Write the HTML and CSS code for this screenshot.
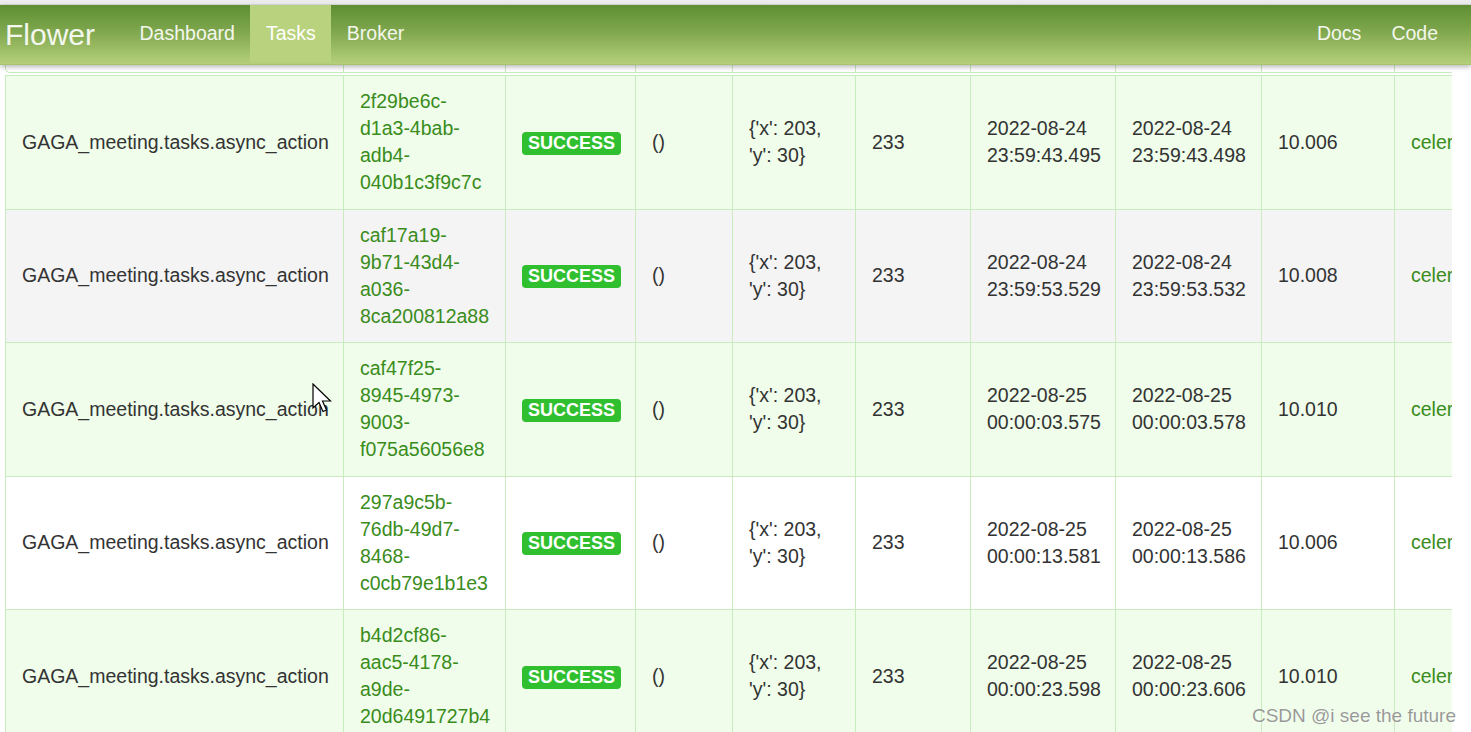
FILE: index.html
```html
<!DOCTYPE html>
<html lang="en">
<head>
  <meta charset="UTF-8">
  <title>Flower</title>
  <meta name="viewport" content="width=device-width, initial-scale=1.0">
  <link rel="stylesheet" href="styles.css">
</head>
<body>
  <div class="topline"></div>
  <div class="navbar">
    <a href="#" class="brand">Flower</a>
    <ul class="nav">
      <li><a href="#">Dashboard</a></li>
      <li class="active"><a href="#">Tasks</a></li>
      <li><a href="#">Broker</a></li>
    </ul>
    <ul class="nav nav-right">
      <li><a href="#">Docs</a></li>
      <li><a href="#">Code</a></li>
    </ul>
  </div>

  <div class="container">
    <div class="stub">
      <div class="c1"></div><div class="c2"></div><div class="c3"></div><div class="c4"></div><div class="c5"></div>
      <div class="c6"></div><div class="c7"></div><div class="c8"></div><div class="c9"></div><div class="c10"></div>
    </div>
    <table class="tasks">
      <colgroup>
        <col class="c1"><col class="c2"><col class="c3"><col class="c4"><col class="c5">
        <col class="c6"><col class="c7"><col class="c8"><col class="c9"><col class="c10">
      </colgroup>
      <tbody>
        <tr class="green">
          <td>GAGA_meeting.tasks.async_action</td>
          <td><a href="#">2f29be6c-d1a3-4bab-adb4-040b1c3f9c7c</a></td>
          <td><span class="label">SUCCESS</span></td>
          <td>()</td>
          <td>{'x': 203, 'y': 30}</td>
          <td>233</td>
          <td>2022-08-24 23:59:43.495</td>
          <td>2022-08-24 23:59:43.498</td>
          <td>10.006</td>
          <td class="worker"><a href="#">celer</a></td>
        </tr>
        <tr class="gray">
          <td>GAGA_meeting.tasks.async_action</td>
          <td><a href="#">caf17a19-9b71-43d4-a036-8ca200812a88</a></td>
          <td><span class="label">SUCCESS</span></td>
          <td>()</td>
          <td>{'x': 203, 'y': 30}</td>
          <td>233</td>
          <td>2022-08-24 23:59:53.529</td>
          <td>2022-08-24 23:59:53.532</td>
          <td>10.008</td>
          <td class="worker"><a href="#">celer</a></td>
        </tr>
        <tr class="green">
          <td>GAGA_meeting.tasks.async_action</td>
          <td><a href="#">caf47f25-8945-4973-9003-f075a56056e8</a></td>
          <td><span class="label">SUCCESS</span></td>
          <td>()</td>
          <td>{'x': 203, 'y': 30}</td>
          <td>233</td>
          <td>2022-08-25 00:00:03.575</td>
          <td>2022-08-25 00:00:03.578</td>
          <td>10.010</td>
          <td class="worker"><a href="#">celer</a></td>
        </tr>
        <tr class="white">
          <td>GAGA_meeting.tasks.async_action</td>
          <td><a href="#">297a9c5b-76db-49d7-8468-c0cb79e1b1e3</a></td>
          <td><span class="label">SUCCESS</span></td>
          <td>()</td>
          <td>{'x': 203, 'y': 30}</td>
          <td>233</td>
          <td>2022-08-25 00:00:13.581</td>
          <td>2022-08-25 00:00:13.586</td>
          <td>10.006</td>
          <td class="worker"><a href="#">celer</a></td>
        </tr>
        <tr class="green">
          <td>GAGA_meeting.tasks.async_action</td>
          <td><a href="#">b4d2cf86-aac5-4178-a9de-20d6491727b4</a></td>
          <td><span class="label">SUCCESS</span></td>
          <td>()</td>
          <td>{'x': 203, 'y': 30}</td>
          <td>233</td>
          <td>2022-08-25 00:00:23.598</td>
          <td>2022-08-25 00:00:23.606</td>
          <td>10.010</td>
          <td class="worker"><a href="#">celer</a></td>
        </tr>
      </tbody>
    </table>
  </div>

  <svg class="cursor" width="20" height="30" viewBox="0 0 20 30">
    <path d="M1 1 L1 25 L7 19.5 L11 28.5 L14.5 27 L10.5 18 L18.5 18 Z" fill="#fff" stroke="#000" stroke-width="1.2" stroke-linejoin="miter"/>
  </svg>
  <div class="watermark">CSDN @i see the future</div>
</body>
</html>
```

FILE: styles.css
```css
html, body {
  margin: 0;
  padding: 0;
  background: #fff;
  color: #333;
  font-family: "Liberation Sans", Arial, sans-serif;
  font-size: 19.5px;
  line-height: 27px;
  overflow: hidden;
}
a {
  color: #3a8c1c;
  text-decoration: none;
}
.topline {
  height: 5px;
  background: #ededed;
  border-bottom: 1px solid #dcdcdc;
  box-sizing: border-box;
}
.navbar {
  position: relative;
  z-index: 2;
  display: flex;
  align-items: stretch;
  height: 59px;
  background: linear-gradient(to bottom, #5e8e33 0%, #7fa74e 45%, #b5cf7b 100%);
  border-bottom: 1px solid #a9c26e;
  box-shadow: 0 2px 5px rgba(0, 0, 0, 0.28);
}
.brand {
  color: #f4f7ee;
  font-size: 30px;
  line-height: 59px;
  padding: 0 29px 0 5px;
}
.nav {
  display: flex;
  margin: 0;
  padding: 0;
  list-style: none;
}
.nav li a {
  display: block;
  color: #f4f7ee;
  line-height: 57px;
  padding: 0 15.5px;
}
.nav li.active a {
  background: #b9d27d;
  color: #fff;
}
.nav-right {
  margin-left: auto;
  padding-right: 18px;
}
.nav-right li a {
  padding: 0 15px;
}
.container {
  width: 1447px;
  margin-left: 5px;
  overflow: hidden;
}
.stub {
  display: flex;
  height: 7px;
  border-left: 1px solid #c8ecbf;
  border-bottom: 1px solid #c8ecbf;
  border-bottom-left-radius: 5px;
  margin-bottom: 2px;
  width: 1600px;
}
.stub div {
  flex: none;
  box-sizing: border-box;
  border-right: 1px solid #c8ecbf;
}
.tasks {
  table-layout: fixed;
  border-collapse: collapse;
  width: 1600px;
  border-top: 1px solid #c8ecbf;
}
.c1 { width: 338px; }
.c2 { width: 162px; }
.c3 { width: 130px; }
.c4 { width: 97px; }
.c5 { width: 123px; }
.c6 { width: 115px; }
.c7 { width: 145px; }
.c8 { width: 146px; }
.c9 { width: 133px; }
.c10 { width: 211px; }
.tasks td {
  border: 1px solid #c8ecbf;
  padding: 12px 16px 12.5px;
  vertical-align: middle;
  height: 108px;
}
.tasks td.worker {
  white-space: nowrap;
}
tr.green td { background: #effdea; }
tr.gray td { background: #f4f4f4; }
tr.white td { background: #fff; }
.label {
  display: inline-block;
  background: #2fbf2f;
  color: #fff;
  font-weight: bold;
  font-size: 18px;
  line-height: 19px;
  padding: 2px 6px;
  border-radius: 4px;
  vertical-align: middle;
}
.cursor {
  position: absolute;
  left: 312px;
  top: 383px;
}
.watermark {
  position: absolute;
  right: 15px;
  bottom: 3px;
  font-size: 19px;
  color: rgba(120, 120, 120, 0.75);
  text-shadow: 0 0 2px rgba(255, 255, 255, 0.9);
}
```
